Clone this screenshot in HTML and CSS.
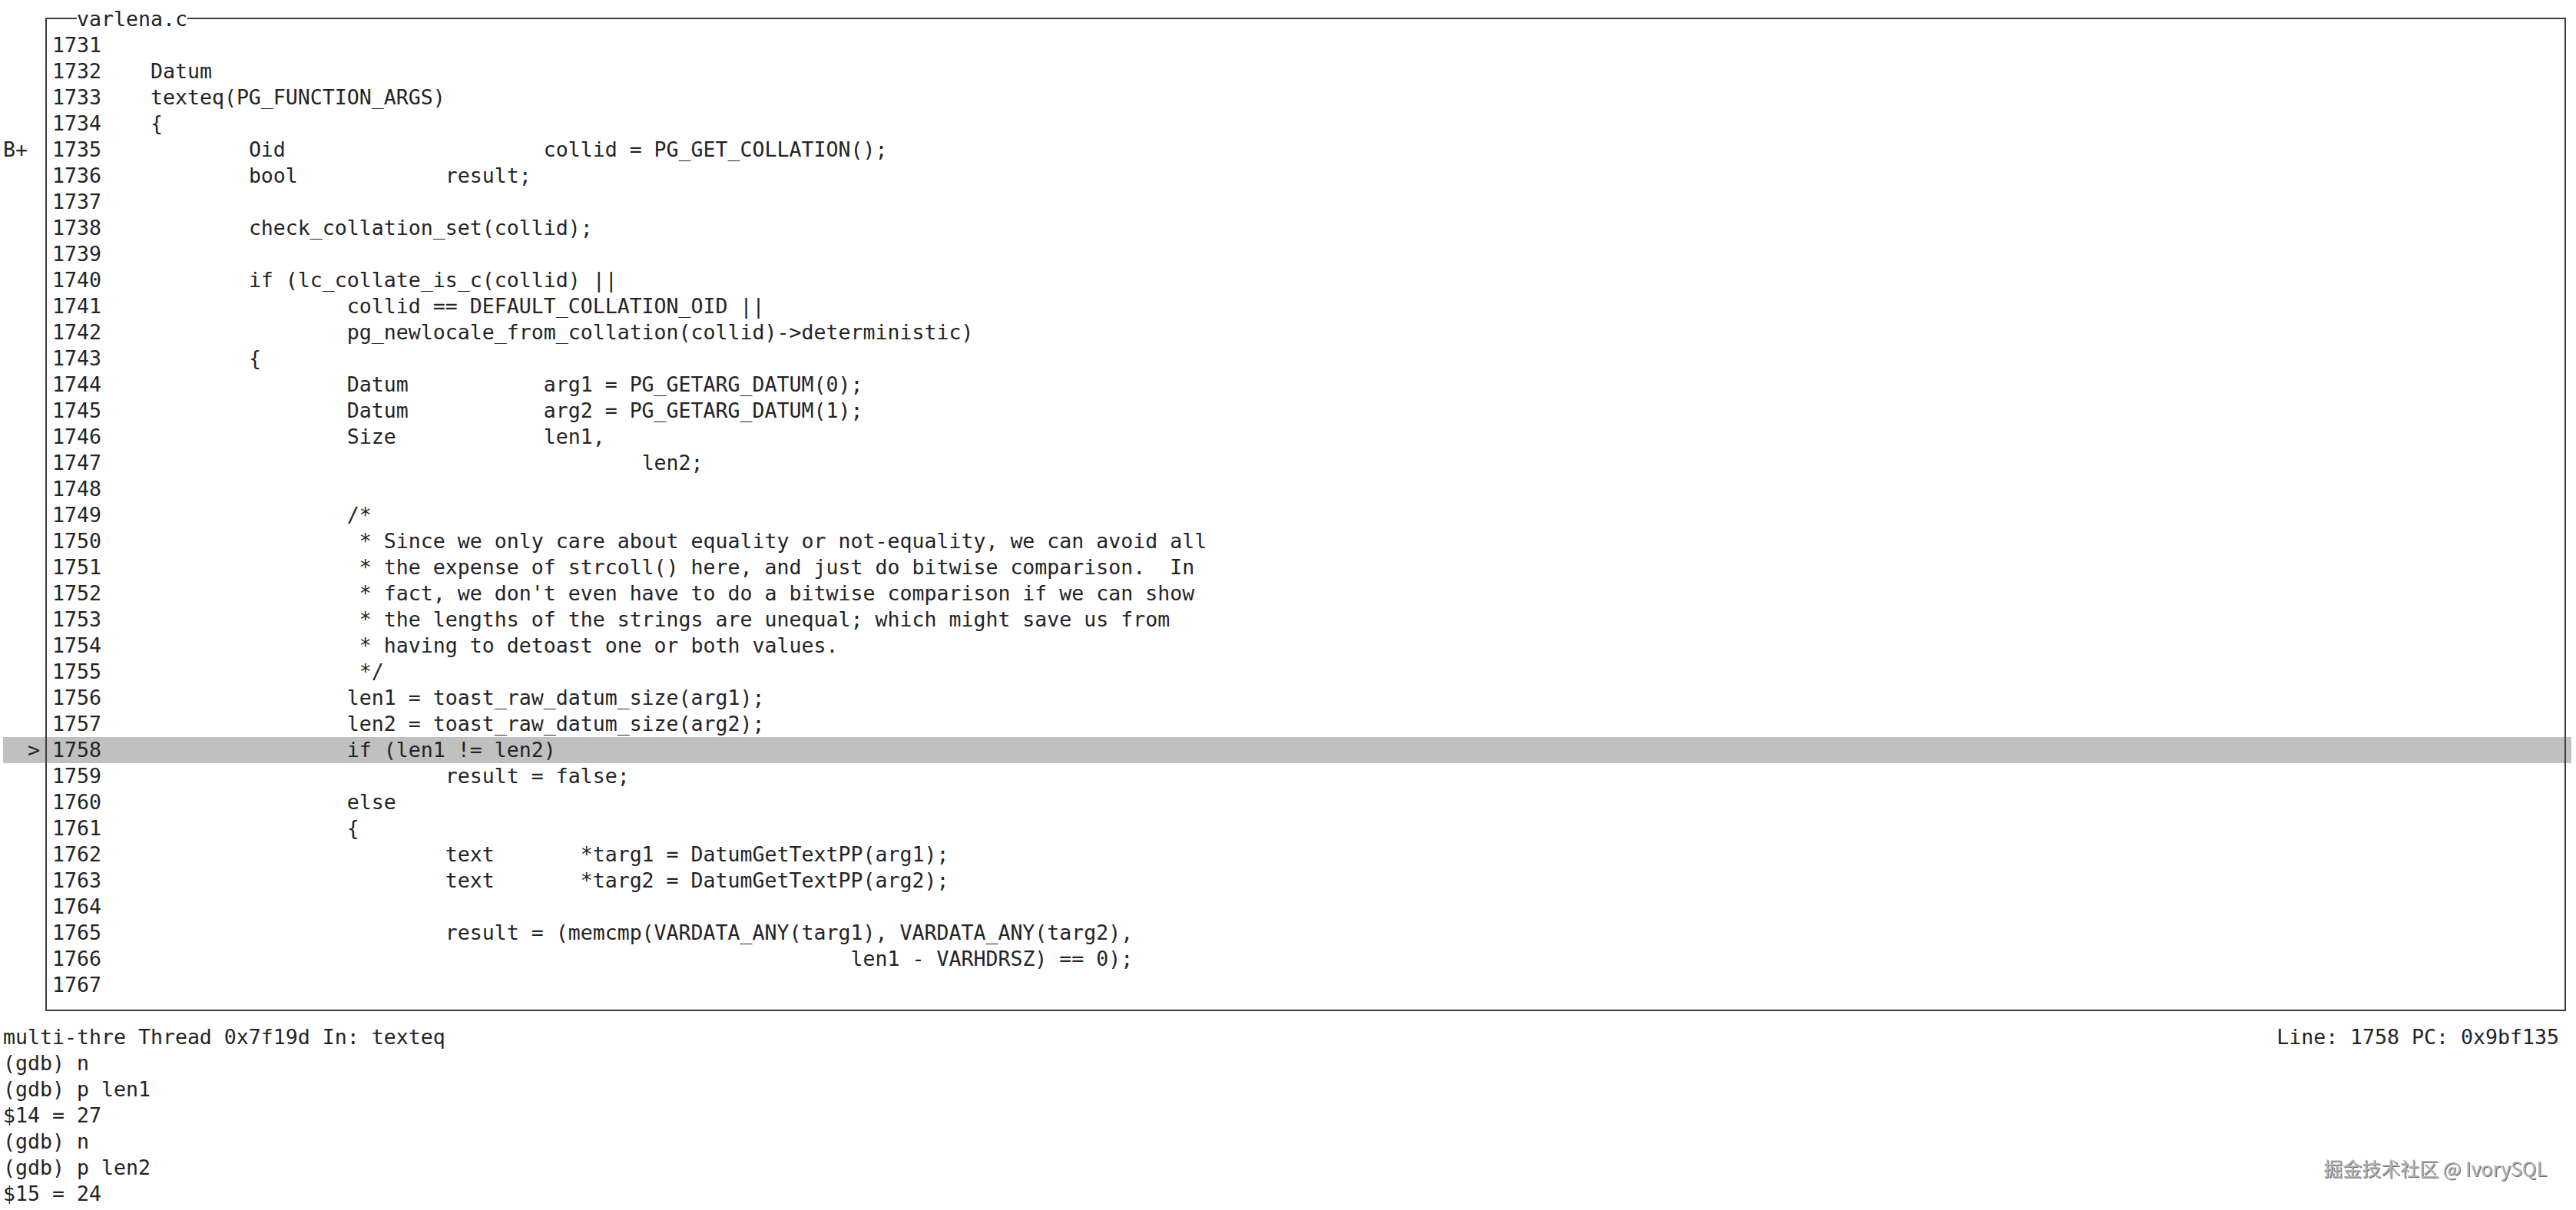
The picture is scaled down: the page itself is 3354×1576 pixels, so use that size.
FILE: index.html
```html
<!DOCTYPE html>
<html>
<head>
<meta charset="utf-8">
<title>gdb tui - varlena.c</title>
<link rel="stylesheet" href="styles.css">
</head>
<body>
<div class="term">
  <div class="srcwin">
    <div class="row"><span class="mark">   </span><span class="line title-line"><span class="title">varlena.c</span></span></div>
    <div class="row"><span class="mark">   </span><span class="line">1731	</span></div>
    <div class="row"><span class="mark">   </span><span class="line">1732	Datum</span></div>
    <div class="row"><span class="mark">   </span><span class="line">1733	texteq(PG_FUNCTION_ARGS)</span></div>
    <div class="row"><span class="mark">   </span><span class="line">1734	{</span></div>
    <div class="row"><span class="mark">B+ </span><span class="line">1735		Oid			collid = PG_GET_COLLATION();</span></div>
    <div class="row"><span class="mark">   </span><span class="line">1736		bool		result;</span></div>
    <div class="row"><span class="mark">   </span><span class="line">1737	</span></div>
    <div class="row"><span class="mark">   </span><span class="line">1738		check_collation_set(collid);</span></div>
    <div class="row"><span class="mark">   </span><span class="line">1739	</span></div>
    <div class="row"><span class="mark">   </span><span class="line">1740		if (lc_collate_is_c(collid) ||</span></div>
    <div class="row"><span class="mark">   </span><span class="line">1741			collid == DEFAULT_COLLATION_OID ||</span></div>
    <div class="row"><span class="mark">   </span><span class="line">1742			pg_newlocale_from_collation(collid)-&gt;deterministic)</span></div>
    <div class="row"><span class="mark">   </span><span class="line">1743		{</span></div>
    <div class="row"><span class="mark">   </span><span class="line">1744			Datum		arg1 = PG_GETARG_DATUM(0);</span></div>
    <div class="row"><span class="mark">   </span><span class="line">1745			Datum		arg2 = PG_GETARG_DATUM(1);</span></div>
    <div class="row"><span class="mark">   </span><span class="line">1746			Size		len1,</span></div>
    <div class="row"><span class="mark">   </span><span class="line">1747						len2;</span></div>
    <div class="row"><span class="mark">   </span><span class="line">1748	</span></div>
    <div class="row"><span class="mark">   </span><span class="line">1749			/*</span></div>
    <div class="row"><span class="mark">   </span><span class="line">1750			 * Since we only care about equality or not-equality, we can avoid all</span></div>
    <div class="row"><span class="mark">   </span><span class="line">1751			 * the expense of strcoll() here, and just do bitwise comparison.  In</span></div>
    <div class="row"><span class="mark">   </span><span class="line">1752			 * fact, we don't even have to do a bitwise comparison if we can show</span></div>
    <div class="row"><span class="mark">   </span><span class="line">1753			 * the lengths of the strings are unequal; which might save us from</span></div>
    <div class="row"><span class="mark">   </span><span class="line">1754			 * having to detoast one or both values.</span></div>
    <div class="row"><span class="mark">   </span><span class="line">1755			 */</span></div>
    <div class="row"><span class="mark">   </span><span class="line">1756			len1 = toast_raw_datum_size(arg1);</span></div>
    <div class="row"><span class="mark">   </span><span class="line">1757			len2 = toast_raw_datum_size(arg2);</span></div>
    <div class="row current"><span class="mark">  &gt;</span><span class="line">1758			if (len1 != len2)</span></div>
    <div class="row"><span class="mark">   </span><span class="line">1759				result = false;</span></div>
    <div class="row"><span class="mark">   </span><span class="line">1760			else</span></div>
    <div class="row"><span class="mark">   </span><span class="line">1761			{</span></div>
    <div class="row"><span class="mark">   </span><span class="line">1762				text	   *targ1 = DatumGetTextPP(arg1);</span></div>
    <div class="row"><span class="mark">   </span><span class="line">1763				text	   *targ2 = DatumGetTextPP(arg2);</span></div>
    <div class="row"><span class="mark">   </span><span class="line">1764	</span></div>
    <div class="row"><span class="mark">   </span><span class="line">1765				result = (memcmp(VARDATA_ANY(targ1), VARDATA_ANY(targ2),</span></div>
    <div class="row"><span class="mark">   </span><span class="line">1766								 len1 - VARHDRSZ) == 0);</span></div>
    <div class="row"><span class="mark">   </span><span class="line">1767	</span></div>
    <div class="row"><span class="mark">   </span><span class="line"> </span></div>
    <div class="frame"></div>
  </div>
  <div class="status">
    <span>multi-thre Thread 0x7f19d In: texteq</span>
    <span class="status-right">Line: 1758 PC: 0x9bf135</span>
  </div>
  <div class="cmd">
    <div class="row">(gdb) n</div>
    <div class="row">(gdb) p len1</div>
    <div class="row">$14 = 27</div>
    <div class="row">(gdb) n</div>
    <div class="row">(gdb) p len2</div>
    <div class="row">$15 = 24</div>
    <div class="row">(gdb) p (len1 != len2)</div>
  </div>
</div>
<div class="watermark">掘金技术社区 @ IvorySQL</div>
</body>
</html>
```

FILE: styles.css
```css
html, body {
  margin: 0;
  padding: 0;
  background: #ffffff;
}

body {
  width: 3354px;
  height: 1576px;
  overflow: hidden;
  position: relative;
}

.term {
  padding: 8px 0 0 4px;
  width: 3344px;
  font-family: "DejaVu Sans Mono", "Liberation Mono", monospace;
  font-size: 26.57px;
  line-height: 34px;
  color: #242424;
  tab-size: 8;
  -moz-tab-size: 8;
}

.srcwin {
  position: relative;
}

.row {
  display: flex;
  height: 34px;
  white-space: pre;
}

.mark {
  width: 48px;
  flex: none;
}

.line {
  flex: 1;
  padding-left: 16px;
}

.current {
  background: #c0c0c0;
}

.title-line {
  padding-left: 48px;
}

.title {
  position: relative;
  z-index: 2;
  background: #ffffff;
}

.frame {
  position: absolute;
  z-index: 1;
  left: 55px;
  top: 15px;
  width: 3282px;
  height: 1294px;
  box-sizing: border-box;
  border: 2px solid #3c3c3c;
  pointer-events: none;
}

.status {
  display: flex;
  justify-content: space-between;
  height: 34px;
  padding-right: 16px;
  white-space: pre;
}

.cmd .row {
  display: block;
}

.watermark {
  position: absolute;
  right: 38px;
  top: 1506px;
  font-family: "Noto Sans CJK SC", "Noto Sans", sans-serif;
  font-size: 25px;
  line-height: 30px;
  color: #b4b4b4;
  text-shadow: 1px 1px 0 #6a6a6a;
  white-space: pre;
}
```
